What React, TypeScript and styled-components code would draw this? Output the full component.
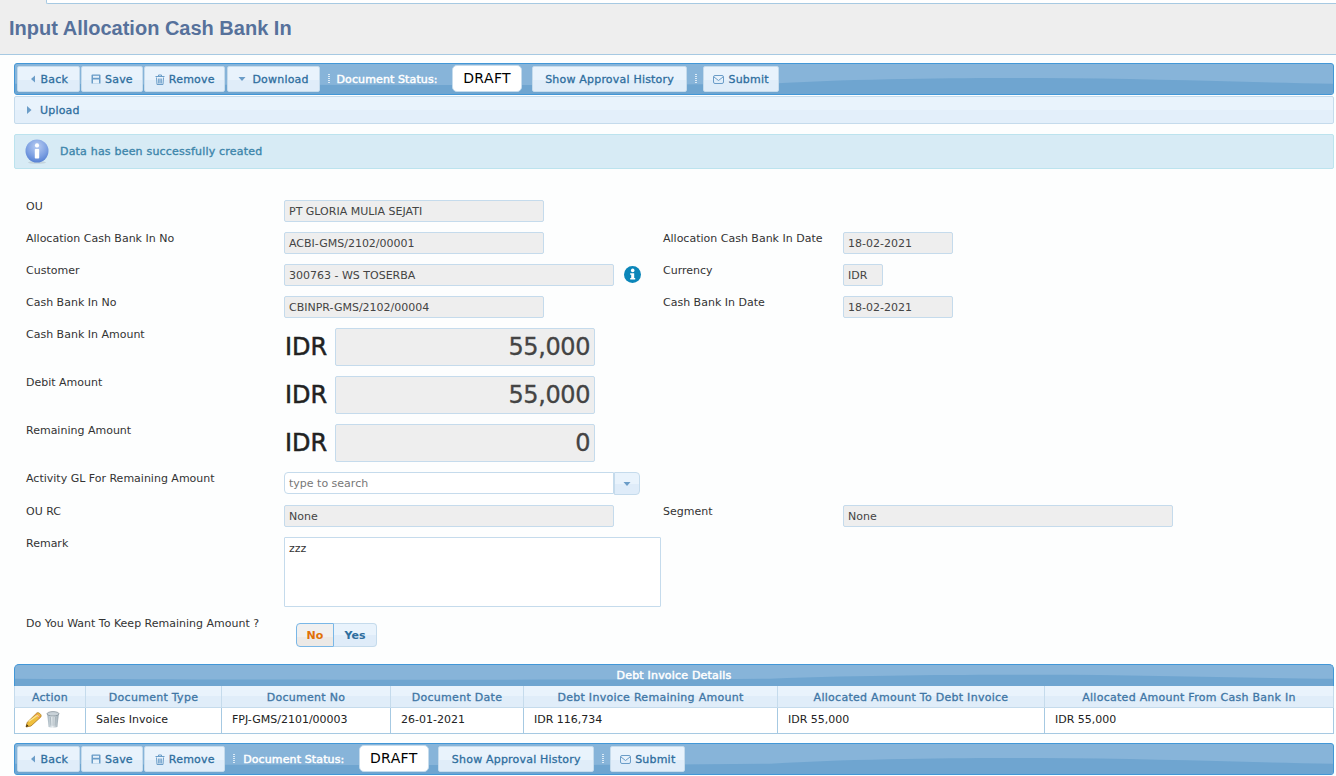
import React from 'react';
import styled, { createGlobalStyle } from 'styled-components';

const GlobalStyle = createGlobalStyle`
  html, body {
    margin: 0;
    padding: 0;
    background: #fff;
    overflow: hidden;
  }
  body {
    font-family: "DejaVu Sans", Verdana, sans-serif;
    font-size: 11px;
    color: #222;
  }
`;

const Wave = () => (
  <WaveSvg viewBox="0 0 1320 32" preserveAspectRatio="none">
    <path d="M0 21 C300 23 560 23 756 21 C860 15 960 15 1026 15 C1130 15 1230 20 1320 21 V32 H0 Z" fill="#6fa5d0" />
  </WaveSvg>
);

const LeftArrow = () => (
  <svg width="8" height="8" viewBox="0 0 8 8"><path d="M6 0.5 V7.5 L2 4 Z" fill="#6b9dc8" /></svg>
);
const RightArrow = () => (
  <svg width="6" height="10" viewBox="0 0 6 10"><path d="M1 1 V9 L5.5 5 Z" fill="#6b9dc8" /></svg>
);
const DownArrow = () => (
  <svg width="8" height="6" viewBox="0 0 8 6"><path d="M0.5 1 H7.5 L4 5 Z" fill="#6b9dc8" /></svg>
);
const SaveIcon = () => (
  <svg width="10" height="10" viewBox="0 0 10 10">
    <path d="M0.5 1.5 Q0.5 0.5 1.5 0.5 H8.5 Q9.5 0.5 9.5 1.5 V9.5 H0.5 Z" fill="#6b9dc8" />
    <rect x="2" y="1.8" width="6" height="2" fill="#e6f1fb" />
    <rect x="2" y="5.5" width="6" height="4" fill="#e6f1fb" />
  </svg>
);
const TrashIcon = () => (
  <svg width="10" height="11" viewBox="0 0 10 11" fill="none" stroke="#6b9dc8" strokeWidth="1">
    <path d="M0.5 2.5 H9.5 M3.5 2.5 V1 H6.5 V2.5" />
    <path d="M1.5 3.5 L2 10.5 H8 L8.5 3.5 M3.7 4.5 V9.5 M5 4.5 V9.5 M6.3 4.5 V9.5" />
  </svg>
);
const MailIcon = () => (
  <svg width="11" height="9" viewBox="0 0 11 9" fill="none" stroke="#6b9dc8" strokeWidth="1">
    <rect x="0.5" y="0.5" width="10" height="8" rx="1.5" />
    <path d="M1 2 L5.5 5.5 L10 2" />
  </svg>
);
const InfoBubble = () => (
  <svg width="24" height="25" viewBox="0 0 24 25">
    <defs>
      <radialGradient id="bubble" cx="50%" cy="30%" r="75%">
        <stop offset="0%" stopColor="#b9cdf2" />
        <stop offset="60%" stopColor="#7da0e2" />
        <stop offset="100%" stopColor="#4f7bd0" />
      </radialGradient>
    </defs>
    <ellipse cx="12" cy="23.5" rx="9" ry="1.3" fill="#c4d4dc" />
    <circle cx="12" cy="12" r="11.5" fill="url(#bubble)" />
    <circle cx="12" cy="6.4" r="2.1" fill="#fff" />
    <rect x="9.8" y="10" width="4.4" height="9.6" rx="0.8" fill="#fff" />
  </svg>
);
const InfoDot = () => (
  <svg width="17" height="17" viewBox="0 0 17 17">
    <circle cx="8.5" cy="8.5" r="8.5" fill="#0b86b9" />
    <circle cx="8.7" cy="4.4" r="1.8" fill="#fff" />
    <path d="M6.2 7.2 H10.2 V12 H11.2 V13.6 H6.2 V12 H7.2 V8.8 H6.2 Z" fill="#fff" />
  </svg>
);
const Pencil = () => (
  <svg width="17" height="16" viewBox="0 0 17 16">
    <path d="M1 15 L2.2 10.4 L11.8 1 Q13 0.2 14.4 1.2 L15.6 2.4 Q16.6 3.8 15.8 5 L6 14 Z" fill="#f0bf3c" stroke="#a9761a" strokeWidth="0.8" />
    <path d="M11.6 1.4 L15.6 5.2 L14.2 6.6 L10.2 2.8 Z" fill="#e8925a" />
    <path d="M3.6 9.6 L12.2 3.4 L13.6 4.6" fill="none" stroke="#fbe69a" strokeWidth="1.2" />
    <path d="M1 15 L1.7 12.3 L3.6 14 Z" fill="#3a2a12" />
  </svg>
);
const Bin = () => (
  <svg width="14" height="17" viewBox="0 0 14 17">
    <defs>
      <linearGradient id="bin" x1="0" x2="1" y1="0" y2="0">
        <stop offset="0%" stopColor="#9fb0bb" />
        <stop offset="45%" stopColor="#e9eef1" />
        <stop offset="100%" stopColor="#94a3ad" />
      </linearGradient>
    </defs>
    <path d="M1.2 3 L2.6 16 Q7 17.4 11.4 16 L12.8 3 Z" fill="url(#bin)" />
    <ellipse cx="7" cy="2.8" rx="6" ry="2.2" fill="#c9d2d8" stroke="#7d8a92" strokeWidth="0.7" />
    <path d="M4.4 6 L4.9 14.6 M7 6 V14.8 M9.6 6 L9.1 14.6" stroke="#a3b0b8" strokeWidth="0.8" />
  </svg>
);

type Fact = { label: string; value: string; width: number };

const tableColumns: { title: string; width: number; value: string }[] = [
  { title: 'Action', width: 71, value: '' },
  { title: 'Document Type', width: 136, value: 'Sales Invoice' },
  { title: 'Document No', width: 169, value: 'FPJ-GMS/2101/00003' },
  { title: 'Document Date', width: 133, value: '26-01-2021' },
  { title: 'Debt Invoice Remaining Amount', width: 254, value: 'IDR 116,734' },
  { title: 'Allocated Amount To Debt Invoice', width: 267, value: 'IDR 55,000' },
  { title: 'Allocated Amount From Cash Bank In', width: 288, value: 'IDR 55,000' },
];

const amounts = [
  { label: 'Cash Bank In Amount', value: '55,000' },
  { label: 'Debit Amount', value: '55,000' },
  { label: 'Remaining Amount', value: '0' },
];

const Toolbar: React.FC<{ download?: boolean }> = ({ download }) => (
  <Bar>
    <Wave />
    <ToolButton $pad={10.5}><LeftArrow />Back</ToolButton>
    <ToolButton $pad={9}><SaveIcon />Save</ToolButton>
    <ToolButton $pad={9.5}><TrashIcon />Remove</ToolButton>
    {download && <ToolButton $pad={10.75} $gap={6}><DownArrow />Download</ToolButton>}
    <Grip />
    <StatusLabel $offset={download ? 0 : 2}>Document Status:</StatusLabel>
    <StatusBadge>DRAFT</StatusBadge>
    <ToolButton $pad={12.5}>Show Approval History</ToolButton>
    <Grip />
    <ToolButton $pad={9}><MailIcon />Submit</ToolButton>
  </Bar>
);

const ReadonlyRow: React.FC<{ left: Fact; right?: Fact; after?: React.ReactNode }> = ({ left, right, after }) => (
  <FormRow>
    <FieldLabel>{left.label}</FieldLabel>
    <FieldCell>
      <ReadonlyBox $width={left.width}>{left.value}</ReadonlyBox>
      {after}
    </FieldCell>
    {right && <FieldLabel>{right.label}</FieldLabel>}
    {right && <ReadonlyBox $width={right.width}>{right.value}</ReadonlyBox>}
  </FormRow>
);

export default function App() {
  return (
    <Page>
      <GlobalStyle />
      <TitleBand>
        <TabEdge />
        <Title>Input Allocation Cash Bank In</Title>
      </TitleBand>
      <Content>
        <Toolbar download />
        <UploadPanel><RightArrow />Upload</UploadPanel>
        <Message><InfoBubble />Data has been successfully created</Message>
        <Form>
          <ReadonlyRow left={{ label: 'OU', value: 'PT GLORIA MULIA SEJATI', width: 260 }} />
          <ReadonlyRow
            left={{ label: 'Allocation Cash Bank In No', value: 'ACBI-GMS/2102/00001', width: 260 }}
            right={{ label: 'Allocation Cash Bank In Date', value: '18-02-2021', width: 110 }}
          />
          <ReadonlyRow
            left={{ label: 'Customer', value: '300763 - WS TOSERBA', width: 330 }}
            right={{ label: 'Currency', value: 'IDR', width: 40 }}
            after={<InfoSlot><InfoDot /></InfoSlot>}
          />
          <ReadonlyRow
            left={{ label: 'Cash Bank In No', value: 'CBINPR-GMS/2102/00004', width: 260 }}
            right={{ label: 'Cash Bank In Date', value: '18-02-2021', width: 110 }}
          />
          {amounts.map((a) => (
            <AmountRow key={a.label}>
              <FieldLabel>{a.label}</FieldLabel>
              <FieldCell>
                <Currency>IDR</Currency>
                <AmountBox>{a.value}</AmountBox>
              </FieldCell>
            </AmountRow>
          ))}
          <SearchRow>
            <FieldLabel>Activity GL For Remaining Amount</FieldLabel>
            <FieldCell>
              <SearchBox>type to search</SearchBox>
              <SearchButton><DownArrow /></SearchButton>
            </FieldCell>
          </SearchRow>
          <ReadonlyRow
            left={{ label: 'OU RC', value: 'None', width: 330 }}
            right={{ label: 'Segment', value: 'None', width: 330 }}
          />
          <RemarkRow>
            <FieldLabel>Remark</FieldLabel>
            <RemarkBox>zzz</RemarkBox>
          </RemarkRow>
          <ToggleRow>
            <FieldLabel>Do You Want To Keep Remaining Amount ?</FieldLabel>
            <Toggle>
              <ToggleNo>No</ToggleNo>
              <ToggleYes>Yes</ToggleYes>
            </Toggle>
          </ToggleRow>
        </Form>
        <section>
          <TableCaption><Wave /><span>Debt Invoice Details</span></TableCaption>
          <TableHead>
            {tableColumns.map((c) => (
              <HeadCell key={c.title} $width={c.width}>{c.title}</HeadCell>
            ))}
          </TableHead>
          <TableRow>
            {tableColumns.map((c, i) => (
              <BodyCell key={c.title} $width={c.width}>
                {i === 0 ? <><Pencil /><Bin /></> : c.value}
              </BodyCell>
            ))}
          </TableRow>
        </section>
        <BottomBar>
          <Toolbar />
        </BottomBar>
      </Content>
    </Page>
  );
}

const Page = styled.div`
  width: 1336px;
  height: 776px;
  overflow: hidden;
  background: #fdfefe;
`;

const TitleBand = styled.header`
  position: relative;
  height: 55px;
  box-sizing: border-box;
  background: #eeeeee;
  border-bottom: 1px solid #a6c9e2;
  display: flex;
  align-items: center;
  padding: 3px 0 0 9px;
`;

const TabEdge = styled.div`
  position: absolute;
  left: 46px;
  right: 0;
  top: 0;
  height: 3px;
  background: #fff;
  border-left: 1px solid #a6c9e2;
  border-bottom: 1px solid #a6c9e2;
  border-bottom-left-radius: 2px;
`;

const Title = styled.h1`
  margin: 0;
  font-family: "Liberation Sans", Arial, sans-serif;
  font-size: 20px;
  font-weight: bold;
  color: #56719b;
`;

const Content = styled.main`
  padding: 8px 2px 0 14px;
`;

const Bar = styled.div`
  position: relative;
  height: 32px;
  box-sizing: border-box;
  display: flex;
  align-items: center;
  gap: 1.5px;
  padding: 0 0 0 2px;
  background: #87b4d9;
  border: 1px solid #4297d7;
  border-radius: 3px;
  overflow: hidden;
`;

const BottomBar = styled.div`
  margin-top: 9px;
`;

const WaveSvg = styled.svg`
  position: absolute;
  left: 0;
  top: 0;
  width: 100%;
  height: 100%;
`;

const ToolButton = styled.button<{ $pad: number; $gap?: number }>`
  position: relative;
  height: 26px;
  display: inline-flex;
  align-items: center;
  gap: ${({ $gap }) => $gap ?? 4}px;
  padding: 0 ${({ $pad }) => $pad}px;
  background: linear-gradient(#e9f3fc 0 55%, #e0edf9 55% 100%);
  border: 1px solid #c5dbec;
  border-radius: 2px;
  font-family: inherit;
  font-size: 11px;
  font-weight: normal;
  letter-spacing: 0.2px;
  -webkit-text-stroke: 0.3px #2e6e9e;
  color: #2e6e9e;
`;

const Grip = styled.span`
  position: relative;
  width: 2px;
  height: 10px;
  margin: 0 5px 0 6px;
  background: repeating-linear-gradient(#dcebf7 0 1px, transparent 1px 2px);
`;

const StatusLabel = styled.span<{ $offset: number }>`
  position: relative;
  margin: 0 13px 0 ${({ $offset }) => $offset}px;
  letter-spacing: 0.12px;
  -webkit-text-stroke: 0.45px #fff;
  color: #fff;
`;

const StatusBadge = styled.span`
  position: relative;
  width: 70px;
  height: 27px;
  box-sizing: border-box;
  margin: 0 8px 2px 0;
  display: flex;
  align-items: center;
  justify-content: center;
  padding-bottom: 1px;
  background: #fff;
  border: 1px solid #c5dbec;
  border-radius: 5px;
  font-size: 14px;
  letter-spacing: 0.4px;
  color: #000;
`;

const UploadPanel = styled.div`
  margin-top: 1px;
  height: 28px;
  box-sizing: border-box;
  display: flex;
  align-items: center;
  gap: 8px;
  padding-left: 11px;
  background: linear-gradient(#e9f3fc 0 50%, #e3effa 50% 100%);
  border: 1px solid #c5dbec;
  border-radius: 2px;
  letter-spacing: 0.2px;
  -webkit-text-stroke: 0.3px #2e6e9e;
  color: #2e6e9e;
`;

const Message = styled.div`
  margin-top: 10px;
  height: 35px;
  box-sizing: border-box;
  display: flex;
  align-items: center;
  gap: 11px;
  padding-left: 10px;
  background: #d7ebf5;
  border: 1px solid #bce3ee;
  border-radius: 2px;
  letter-spacing: 0.2px;
  -webkit-text-stroke: 0.35px #3d86ab;
  color: #3d86ab;
`;

const Form = styled.section`
  margin-top: 31px;
  padding-left: 12px;
`;

const FormRow = styled.div`
  display: grid;
  grid-template-columns: 258px 379px 180px 1fr;
  height: 32px;
`;

const AmountRow = styled(FormRow)`
  height: 48px;
`;

const SearchRow = styled(FormRow)`
  height: 33px;
`;

const RemarkRow = styled(FormRow)`
  height: 80px;
`;

const ToggleRow = styled(FormRow)`
  height: 47px;
`;

const FieldLabel = styled.label`
  color: #333;
  line-height: 13px;
`;

const FieldCell = styled.div`
  display: flex;
  align-items: flex-start;
`;

const ReadonlyBox = styled.div<{ $width: number }>`
  width: ${({ $width }) => $width}px;
  height: 22px;
  box-sizing: border-box;
  flex-shrink: 0;
  padding: 1px 4px 0;
  line-height: 20px;
  background: #eeeeee;
  border: 1px solid #c5dbec;
  border-radius: 2px;
  color: #444;
`;

const InfoSlot = styled.span`
  margin: 2px 0 0 10px;
`;

const Currency = styled.span`
  width: 51px;
  padding-left: 1px;
  box-sizing: border-box;
  font-size: 24px;
  line-height: 38px;
  color: #222;
  -webkit-text-stroke: 0.5px #222;
`;

const AmountBox = styled.div`
  width: 260px;
  height: 38px;
  box-sizing: border-box;
  padding: 0 4px;
  text-align: right;
  font-size: 24px;
  line-height: 36px;
  letter-spacing: -0.4px;
  -webkit-text-stroke: 0.3px #444;
  background: #eeeeee;
  border: 1px solid #c5dbec;
  border-radius: 2px;
  color: #444;
`;

const SearchBox = styled.div`
  width: 330px;
  height: 22px;
  box-sizing: border-box;
  padding: 1px 4px 0;
  line-height: 20px;
  background: #fff;
  border: 1px solid #c5dbec;
  border-radius: 4px 0 0 4px;
  color: #777;
`;

const SearchButton = styled.div`
  width: 26px;
  height: 23px;
  box-sizing: border-box;
  display: flex;
  align-items: center;
  justify-content: center;
  background: linear-gradient(#e9f3fc 0 50%, #dfecf9 50% 100%);
  border: 1px solid #c5dbec;
  border-radius: 0 4px 4px 0;
`;

const RemarkBox = styled.div`
  width: 377px;
  height: 70px;
  box-sizing: border-box;
  padding: 3px 4px;
  line-height: 16px;
  background: #fff;
  border: 1px solid #c5dbec;
  border-radius: 1px;
  color: #333;
`;

const Toggle = styled.div`
  display: flex;
  align-items: stretch;
  height: 24px;
  margin: 6px 0 0 12px;
  font-weight: bold;
`;

const ToggleNo = styled.span`
  width: 38px;
  box-sizing: border-box;
  display: flex;
  align-items: center;
  justify-content: center;
  background: linear-gradient(#f0f0f0 0 60%, #ece9e6 60% 100%);
  border: 1px solid #79b7e7;
  border-radius: 4px 0 0 4px;
  color: #e17009;
`;

const ToggleYes = styled.span`
  width: 43px;
  box-sizing: border-box;
  display: flex;
  align-items: center;
  justify-content: center;
  background: linear-gradient(#e9f3fc 0 50%, #dfecf9 50% 100%);
  border: 1px solid #c5dbec;
  border-left: none;
  border-radius: 0 4px 4px 0;
  color: #2e6e9e;
`;

const TableCaption = styled.div`
  position: relative;
  height: 22px;
  box-sizing: border-box;
  display: flex;
  align-items: center;
  justify-content: center;
  background: #87b4d9;
  border: 1px solid #4297d7;
  border-bottom: none;
  border-radius: 5px 5px 0 0;
  overflow: hidden;
  letter-spacing: 0.2px;
  -webkit-text-stroke: 0.45px #fff;
  color: #fff;
  span {
    position: relative;
  }
`;

const TableHead = styled.div`
  display: flex;
  height: 22px;
  box-sizing: border-box;
  background: linear-gradient(#e9f3fc 0 50%, #e0edf9 50% 100%);
  border: 1px solid #c5dbec;
  border-top: none;
`;

const HeadCell = styled.div<{ $width: number }>`
  width: ${({ $width }) => $width}px;
  box-sizing: border-box;
  display: flex;
  align-items: center;
  justify-content: center;
  padding-top: 1px;
  border-right: 1px solid #c5dbec;
  letter-spacing: 0.28px;
  -webkit-text-stroke: 0.3px #3f76a5;
  color: #3f76a5;
  &:last-child {
    border-right: none;
    flex: 1;
  }
`;

const TableRow = styled.div`
  display: flex;
  height: 26px;
  box-sizing: border-box;
  background: #fff;
  border: 1px solid #a6c9e2;
  border-top: none;
`;

const BodyCell = styled.div<{ $width: number }>`
  width: ${({ $width }) => $width}px;
  box-sizing: border-box;
  display: flex;
  align-items: center;
  gap: 4px;
  padding: 0 0 2px 10px;
  border-right: 1px solid #a6c9e2;
  color: #222;
  &:last-child {
    border-right: none;
    flex: 1;
  }
`;
